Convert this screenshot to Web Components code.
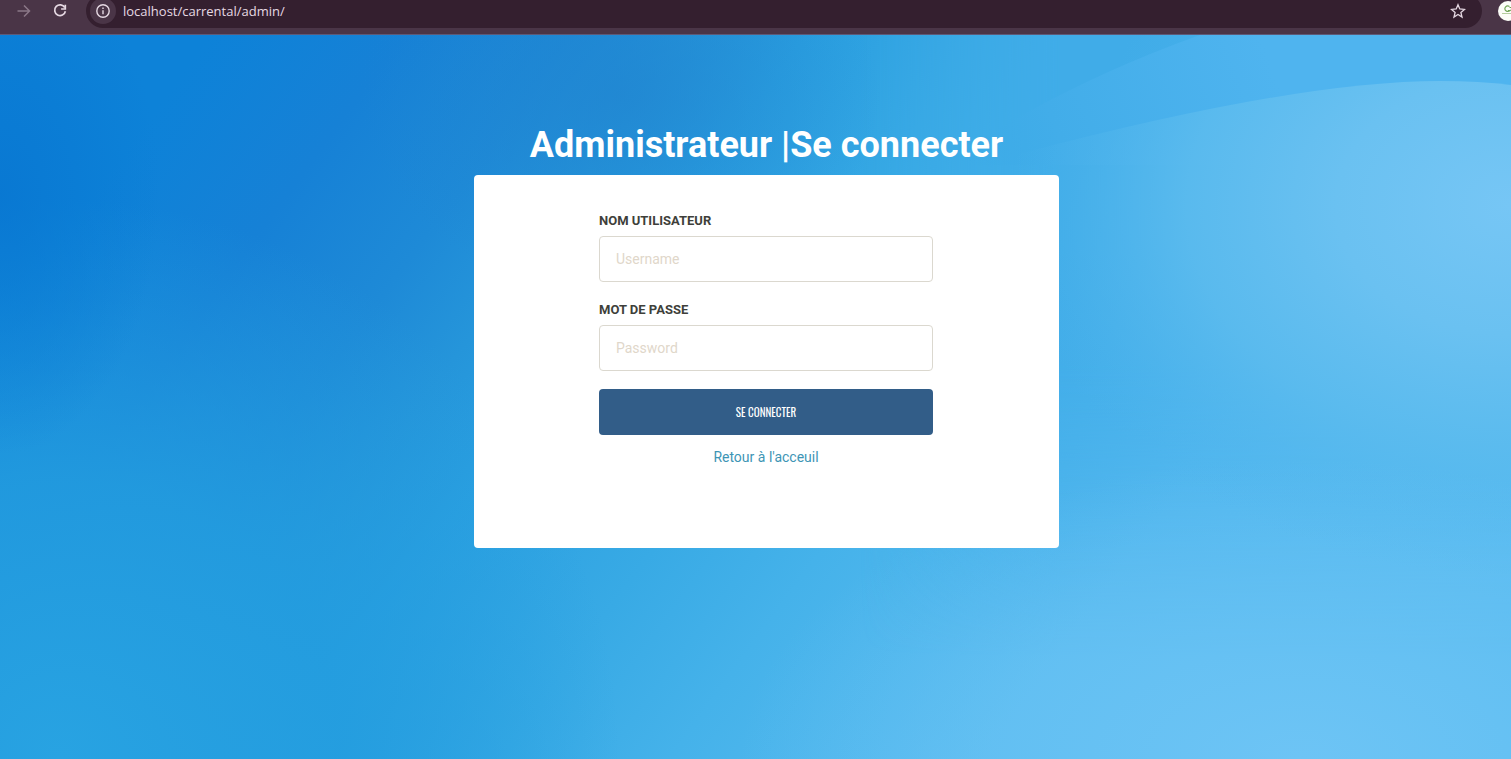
<!DOCTYPE html>
<html lang="fr">
<head>
<meta charset="utf-8">
<title>Administrateur | Se connecter</title>
<style>
    html, body {
        height: 100%;
        margin: 0;
    }

    body {
        display: flex;
        flex-direction: column;
        overflow: hidden;
        font-family: Roboto, "Liberation Sans", sans-serif;
        font-size: 14px;
        line-height: 20px;
    }
</style>
</head>
<body>

<template id="browser-bar-template">
    <style>
        :host {
            display: flex;
            align-items: center;
            box-sizing: border-box;
            height: 35px;
            padding: 0 0 12px 14px;
            gap: 16px;
            overflow: hidden;
            flex: none;
            background: #4a3547;
            border-bottom: 1px solid #5d5a78;
            color: #e6d9e3;
        }

        button {
            display: flex;
            align-items: center;
            justify-content: center;
            flex: none;
            width: 20px;
            height: 20px;
            padding: 0;
            border: none;
            background: none;
            color: inherit;
        }

        button:disabled {
            color: #8b7888;
        }

        .address {
            display: flex;
            align-items: center;
            flex: 1;
            box-sizing: border-box;
            height: 34px;
            padding: 0 14px 0 4px;
            border-radius: 17px;
            background: #341f2f;
        }

        .address .info {
            width: 26px;
            height: 26px;
            border-radius: 13px;
            background: #4a3547;
        }

        input {
            flex: 1;
            min-width: 0;
            padding: 0 0 0 7px;
            border: none;
            outline: none;
            font: 13px/20px "Open Sans", "Noto Sans", sans-serif;
            color: #e6d9e3;
            background: none;
        }

        .profile {
            width: 13px;
            height: 20px;
            justify-content: flex-start;
            overflow: hidden;
        }

        .profile svg {
            flex: none;
        }
    </style>
    <button disabled aria-label="Suivant">
        <svg width="16" height="16" viewBox="0 0 16 16" fill="none" stroke="currentColor" stroke-width="1.5"><path d="M1.500 8h12M8 2.500L13.500 8 8 13.500"/></svg>
    </button>
    <button aria-label="Actualiser">
        <svg width="16" height="16" viewBox="0 0 16 16" fill="none" stroke="currentColor" stroke-width="1.7"><path d="M12.800 4.500A5.400 5.400 0 1 0 13.400 8.300"/><path d="M13.300 1.800V6H9.100"/></svg>
    </button>
    <div class="address">
        <button class="info" aria-label="Informations sur le site">
            <svg width="16" height="16" viewBox="0 0 16 16" fill="none" stroke="currentColor" stroke-width="1.400"><circle cx="8" cy="8" r="6.200"/><path d="M8 7.200v4M8 4.600v1.500"/></svg>
        </button>
        <input type="text" aria-label="Adresse" value="localhost/carrental/admin/">
        <button aria-label="Ajouter aux favoris">
            <svg width="16" height="16" viewBox="0 0 16 16" fill="none" stroke="currentColor" stroke-width="1.300"><path d="M8 1.700l1.800 4.300 4.700.4-3.600 3 1.100 4.600L8 11.500 4 14l1.100-4.600-3.600-3 4.700-.4z"/></svg>
        </button>
    </div>
    <button class="profile" aria-label="Profil">
        <svg width="20" height="20" viewBox="0 0 20 20"><circle cx="10" cy="10" r="10" fill="#fcfdf8"/><path d="M11.500 5.500a3 2.600 0 1 0 .5 4H10M11.500 6.500h5v2.500h-4" fill="none" stroke="#71a556" stroke-width="1.200"/><path d="M4 12.500h12" stroke="#b6ce9f"/></svg>
    </button>
</template>

<template id="wave-page-template">
    <style>
        :host {
            display: grid;
            flex: 1;
            min-height: 0;
        }

        svg, .content {
            grid-area: 1 / 1;
            width: 100%;
            height: 100%;
            min-height: 0;
        }

        .content {
            z-index: 1;
            box-sizing: border-box;
            padding: 90px 0 0 22px;
        }
    </style>
    <svg viewBox="0 0 1511 724" preserveAspectRatio="none" aria-hidden="true">
        <defs>
            <linearGradient id="base" gradientUnits="userSpaceOnUse" x1="150" y1="80" x2="1000" y2="700">
                <stop offset="0" stop-color="#0d82d8"/>
                <stop offset=".15" stop-color="#1681d6"/>
                <stop offset=".28" stop-color="#1e8ad7"/>
                <stop offset=".37" stop-color="#2595da"/>
                <stop offset=".46" stop-color="#2a9fe0"/>
                <stop offset=".63" stop-color="#38aae5"/>
                <stop offset=".76" stop-color="#45b2ea"/>
                <stop offset="1" stop-color="#5abcf0"/>
            </linearGradient>
            <radialGradient id="left" gradientUnits="userSpaceOnUse" cx="0" cy="0" r="1" gradientTransform="translate(0 160) scale(160 260)">
                <stop offset="0" stop-color="#0876d1" stop-opacity=".8"/>
                <stop offset="1" stop-color="#0876d1" stop-opacity="0"/>
            </radialGradient>
            <radialGradient id="corner" gradientUnits="userSpaceOnUse" cx="0" cy="0" r="1" gradientTransform="translate(60 724) scale(560 560)">
                <stop offset="0" stop-color="#28a3e2"/>
                <stop offset=".5" stop-color="#239ddf" stop-opacity=".85"/>
                <stop offset="1" stop-color="#239ddf" stop-opacity="0"/>
            </radialGradient>
            <radialGradient id="dark" gradientUnits="userSpaceOnUse" cx="0" cy="0" r="1" gradientTransform="translate(620 60) scale(260 200)">
                <stop offset="0" stop-color="#2084d0" stop-opacity=".7"/>
                <stop offset="1" stop-color="#2084d0" stop-opacity="0"/>
            </radialGradient>
            <linearGradient id="band" gradientUnits="userSpaceOnUse" x1="960" y1="110" x2="1260" y2="0">
                <stop offset="0" stop-color="#3aaae7" stop-opacity="0"/>
                <stop offset=".3" stop-color="#42ade9"/>
                <stop offset="1" stop-color="#4fb4ef"/>
            </linearGradient>
            <radialGradient id="glow" gradientUnits="userSpaceOnUse" cx="0" cy="0" r="1" gradientTransform="translate(1511 170) scale(500 370)">
                <stop offset="0" stop-color="#76c6f5"/>
                <stop offset=".35" stop-color="#6ac1f1"/>
                <stop offset=".65" stop-color="#5bbbee" stop-opacity=".9"/>
                <stop offset="1" stop-color="#4cb4ec" stop-opacity="0"/>
            </radialGradient>
            <radialGradient id="bottom" gradientUnits="userSpaceOnUse" cx="0" cy="0" r="1" gradientTransform="translate(1300 724) scale(560 300)">
                <stop offset="0" stop-color="#6dc4f5"/>
                <stop offset="1" stop-color="#6dc4f5" stop-opacity="0"/>
            </radialGradient>
            <linearGradient id="side" gradientUnits="userSpaceOnUse" x1="1020" y1="300" x2="1511" y2="480">
                <stop offset="0" stop-color="#40ace8"/>
                <stop offset=".5" stop-color="#4fb5ee"/>
                <stop offset="1" stop-color="#5dbdf2"/>
            </linearGradient>
            <linearGradient id="fade" gradientUnits="userSpaceOnUse" x1="0" y1="330" x2="0" y2="620">
                <stop offset="0" stop-color="#fff"/>
                <stop offset="1" stop-color="#000"/>
            </linearGradient>
            <linearGradient id="fade-x" gradientUnits="userSpaceOnUse" x1="860" y1="0" x2="1060" y2="0">
                <stop offset="0" stop-color="#000"/>
                <stop offset="1" stop-color="#fff"/>
            </linearGradient>
            <mask id="side-mask"><rect width="1511" height="724" fill="url(#fade)"/></mask>
            <mask id="side-mask-x"><rect width="1511" height="724" fill="url(#fade-x)"/></mask>
        </defs>
        <rect width="1511" height="724" fill="url(#base)"/>
        <rect width="1511" height="724" fill="url(#corner)"/>
        <rect width="1511" height="724" fill="url(#left)"/>
        <rect width="1511" height="724" fill="url(#dark)"/>
        <g mask="url(#side-mask)">
            <rect x="800" y="0" width="711" height="724" fill="url(#side)" mask="url(#side-mask-x)"/>
        </g>
        <path d="M1200 0H1511V130H940Q1060 50 1200 0Z" fill="url(#band)"/>
        <path d="M960 135Q1280 46 1440 46Q1480 46 1511 50V724H960Z" fill="url(#glow)"/>
        <rect width="1511" height="724" fill="url(#bottom)"/>
    </svg>
    <div class="content"><slot></slot></div>
</template>

<template id="login-card-template">
    <style>
        :host {
            display: block;
            width: 585px;
            max-width: 100%;
            margin: 0 auto;
        }

        h1 {
            margin: 0 0 10px;
            font-size: 36px;
            line-height: 40px;
            font-weight: 700;
            text-align: center;
            color: #fff;
        }

        form {
            display: flex;
            flex-direction: column;
            box-sizing: border-box;
            padding: 36px 126px 81px 125px;
            border-radius: 4px;
            background: #fff;
        }

        button {
            height: 46px;
            border: none;
            border-radius: 4px;
            background: #325d88;
            color: #fff;
            font-family: Oswald, "Liberation Sans Narrow", "Liberation Sans", sans-serif;
            font-size: 11px;
            text-transform: uppercase;
            cursor: pointer;
        }

        a {
            margin-top: 12px;
            text-align: center;
            text-decoration: none;
            color: #3e95b5;
        }
    </style>
    <h1><slot name="title"></slot></h1>
    <form>
        <slot></slot>
        <button type="submit">Se connecter</button>
        <a href="#">Retour à l'acceuil</a>
    </form>
</template>

<template id="text-field-template">
    <style>
        :host {
            display: flex;
            flex-direction: column;
            gap: 5px;
            margin-bottom: 18px;
        }

        label {
            font-size: 13px;
            font-weight: 700;
            text-transform: uppercase;
            color: #3e3f3a;
        }

        input {
            box-sizing: border-box;
            width: 100%;
            height: 46px;
            padding: 12px 16px;
            border: 1px solid #dbd8cf;
            border-radius: 4px;
            font: inherit;
            color: #3e3f3a;
            background: #fff;
        }

        input::placeholder {
            color: #dfd7ca;
            opacity: 1;
        }
    </style>
    <label for="field"></label>
    <input id="field">
</template>

<browser-bar></browser-bar>
<wave-page>
    <login-card>
        <span slot="title">Administrateur |Se connecter</span>
        <text-field label="Nom utilisateur" placeholder="Username" type="text"></text-field>
        <text-field label="Mot de passe" placeholder="Password" type="password"></text-field>
    </login-card>
</wave-page>

<script>
    class TemplateElement extends HTMLElement {
        constructor() {
            super();
            this.attachShadow({ mode: 'open' });
            const template = document.getElementById(`${this.localName}-template`);
            this.shadowRoot.appendChild(template.content.cloneNode(true));
        }
    }

    class BrowserBar extends TemplateElement {}

    class WavePage extends TemplateElement {}

    class LoginCard extends TemplateElement {
        connectedCallback() {
            this.shadowRoot.querySelector('form').addEventListener('submit', (e) => e.preventDefault());
        }
    }

    class TextField extends TemplateElement {
        connectedCallback() {
            const input = this.shadowRoot.querySelector('input');
            this.shadowRoot.querySelector('label').textContent = this.getAttribute('label');
            input.type = this.getAttribute('type') || 'text';
            input.placeholder = this.getAttribute('placeholder') || '';
        }
    }

    customElements.define('browser-bar', BrowserBar);
    customElements.define('wave-page', WavePage);
    customElements.define('login-card', LoginCard);
    customElements.define('text-field', TextField);
</script>
</body>
</html>
